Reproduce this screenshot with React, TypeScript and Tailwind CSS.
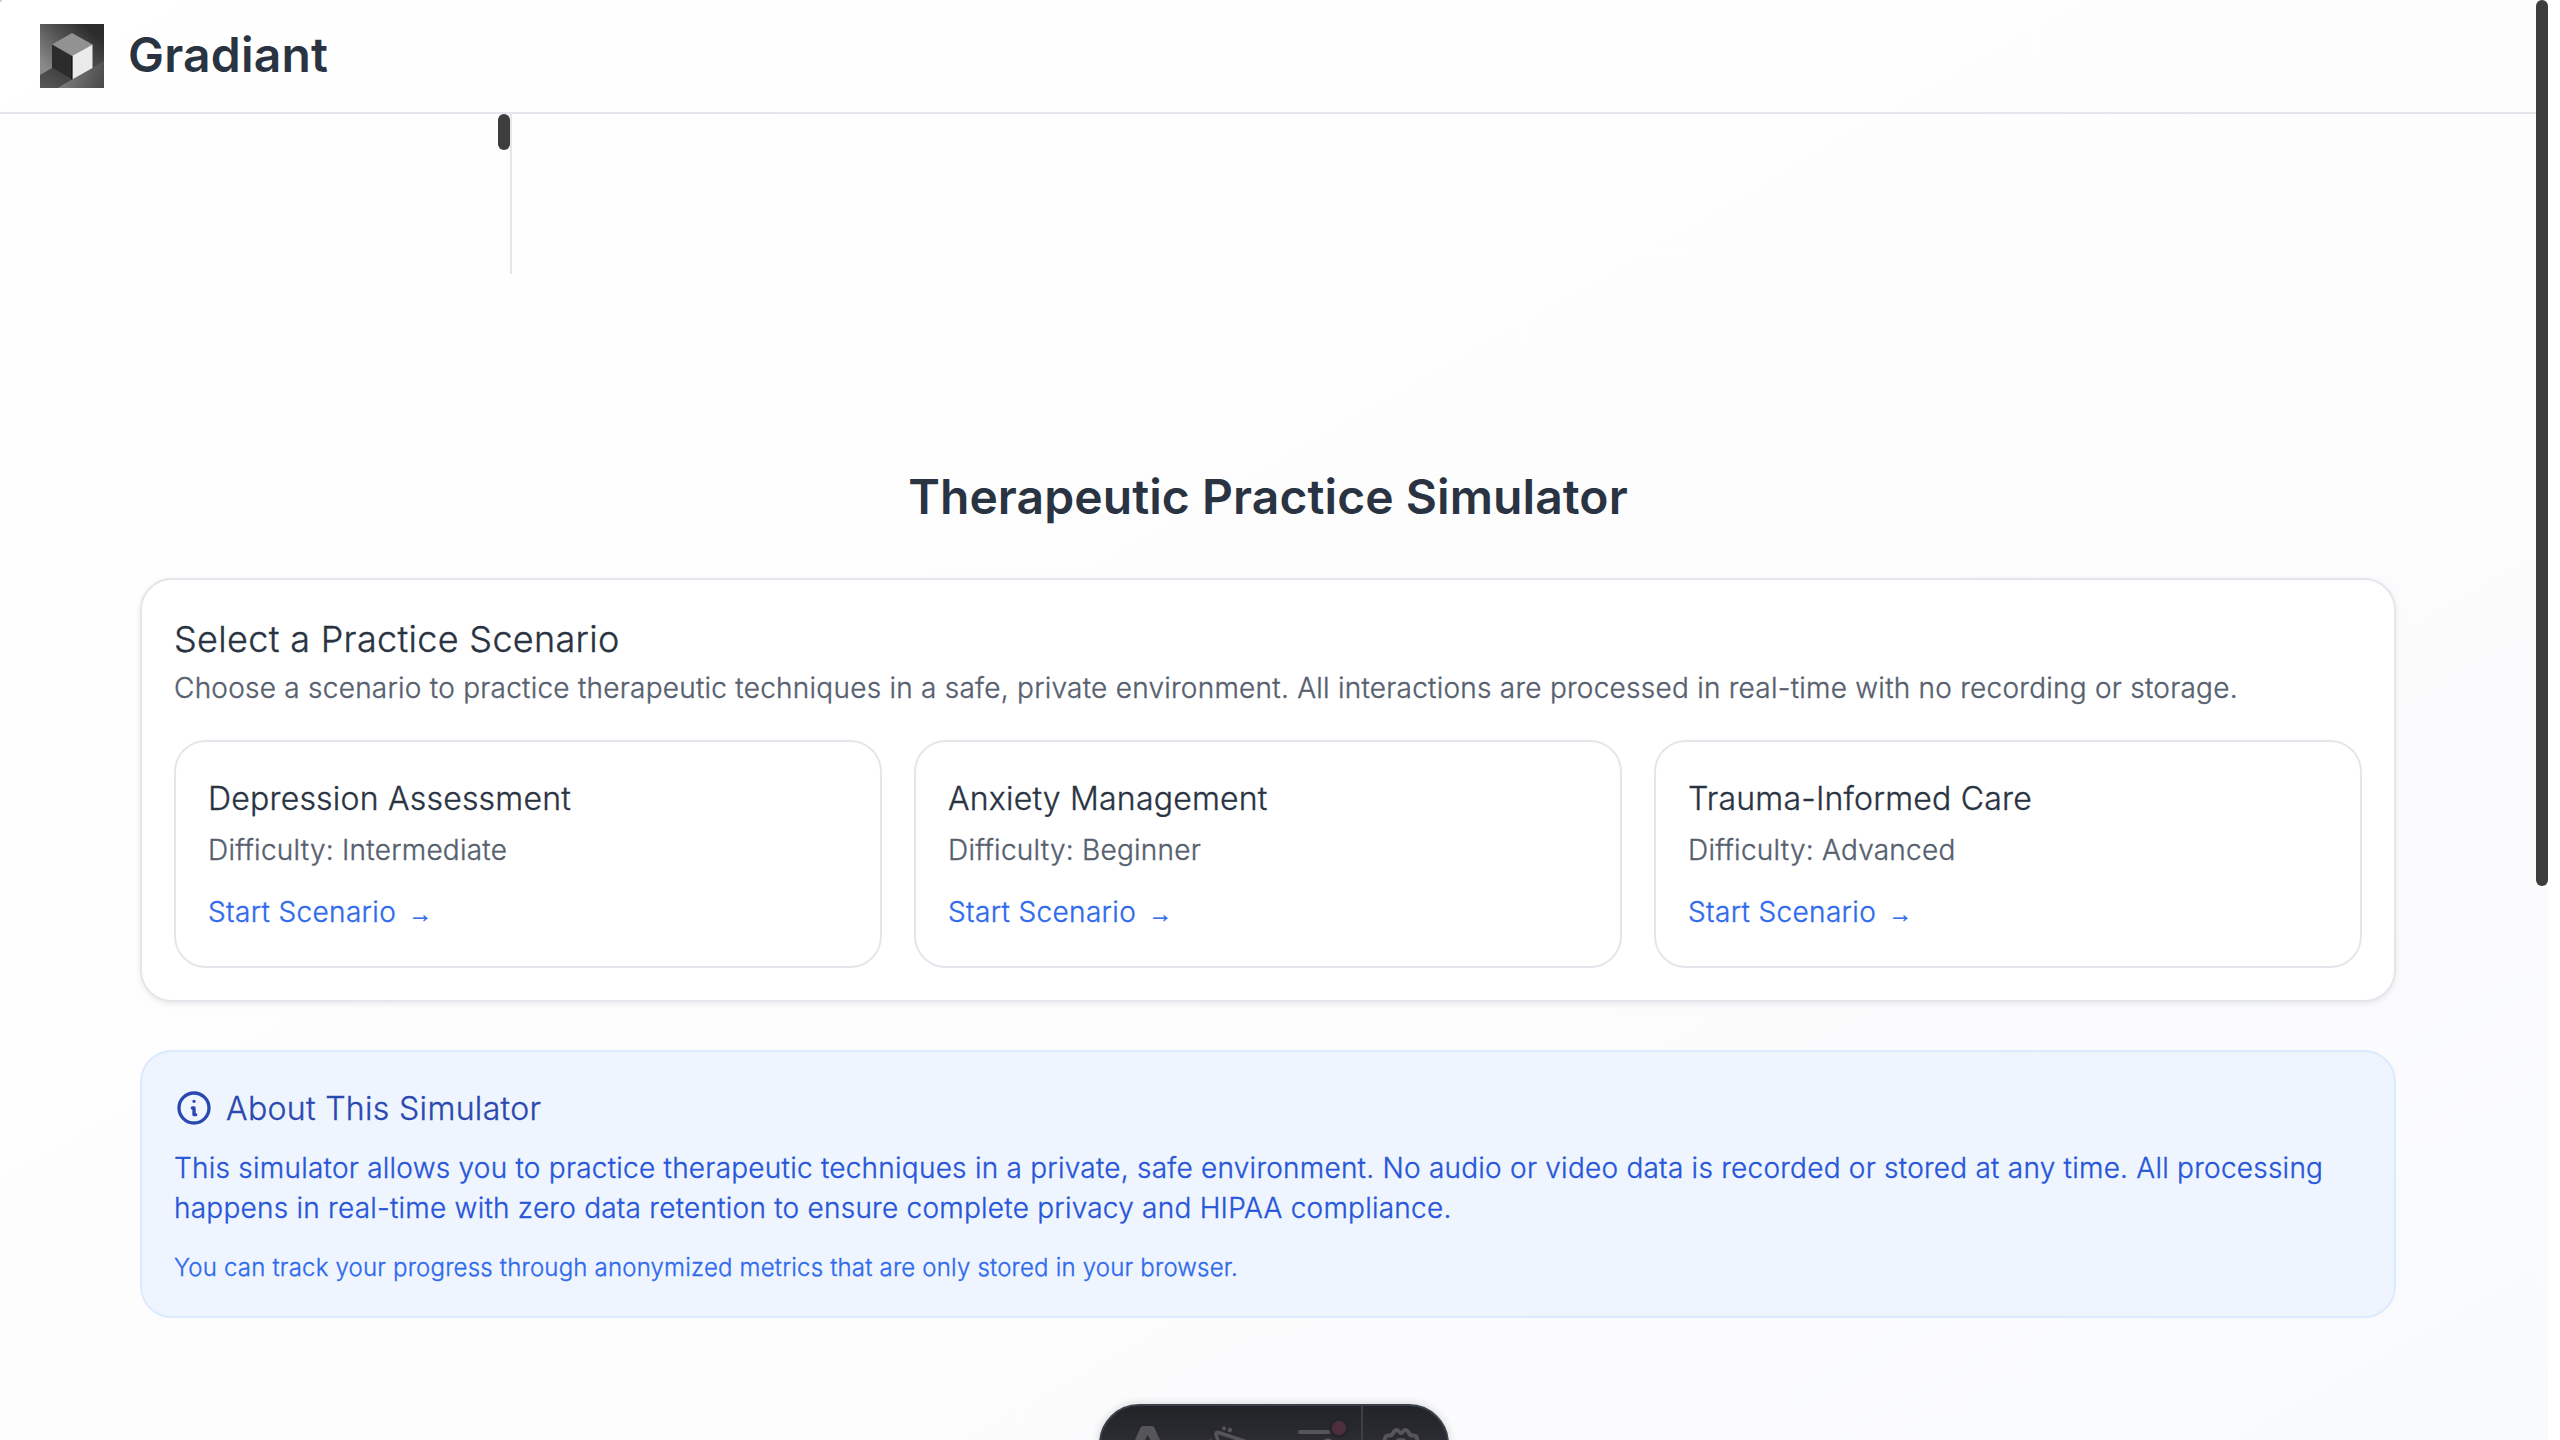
type Scenario = { title: string; difficulty: string };

const scenarios: Scenario[] = [
  { title: "Depression Assessment", difficulty: "Intermediate" },
  { title: "Anxiety Management", difficulty: "Beginner" },
  { title: "Trauma-Informed Care", difficulty: "Advanced" },
];

function Logo() {
  return (
    <svg className="size-16 shrink-0" viewBox="0 0 64 64" aria-hidden="true">
      <defs>
        <linearGradient id="wall" x1="0" y1="1" x2="1" y2="0">
          <stop offset="0.2" stopColor="#8a8a8a" />
          <stop offset="0.55" stopColor="#555555" />
          <stop offset="0.85" stopColor="#2b2b2b" />
        </linearGradient>
        <linearGradient id="side" x1="0" y1="0" x2="0" y2="1">
          <stop offset="0" stopColor="#2b2b2b" stopOpacity="0" />
          <stop offset="1" stopColor="#585858" />
        </linearGradient>
        <linearGradient id="shade" x1="0" y1="1" x2="1" y2="0">
          <stop offset="0" stopColor="#585858" />
          <stop offset="1" stopColor="#3a3a3a" />
        </linearGradient>
        <linearGradient id="floor" x1="0" y1="0.4" x2="1" y2="0.6">
          <stop offset="0" stopColor="#858585" />
          <stop offset="1" stopColor="#4c4c4c" />
        </linearGradient>
      </defs>
      <rect width="64" height="64" fill="url(#wall)" />
      <rect x="50" width="14" height="64" fill="url(#side)" />
      <path d="M32 55.500 52.500 44 64 37V64H18Z" fill="url(#floor)" />
      <path d="M0 51 12 44 32 55.500 18 64H0Z" fill="url(#shade)" />
      <path d="M12 20.500 32 9 52.500 20.500 32 32Z" fill="#929292" />
      <path d="M12 20.500 32 32V55.500L12 44Z" fill="#2c2c2c" />
      <path d="M32 32 52.500 20.500V44L32 55.500Z" fill="#ebebeb" />
      <path d="M32 32V55.500" stroke="#0c0c0c" strokeWidth="1.2" />
    </svg>
  );
}

function InfoIcon() {
  return (
    <svg
      className="size-10 shrink-0"
      viewBox="0 0 24 24"
      fill="none"
      stroke="currentColor"
      strokeWidth="2"
      strokeLinecap="round"
      strokeLinejoin="round"
      aria-hidden="true"
    >
      <path d="M13 16h-1v-4h-1m1-4h.01M21 12a9 9 0 11-18 0 9 9 0 0118 0z" />
    </svg>
  );
}

function ScenarioCard({ title, difficulty }: Scenario) {
  return (
    <div className="flex h-[228px] flex-col items-start rounded-[32px] border-2 border-[#e5e6eb] bg-white px-8 pt-[33px]">
      <h3 className="text-[32px] leading-[47px] tracking-[0.0065em] text-[#2a3342]">{title}</h3>
      <p className="mt-2 text-[28px] leading-10 tracking-[0.0085em] text-[#56606e]">Difficulty: {difficulty}</p>
      <button className="mt-[22px] flex items-baseline text-[28px] leading-10 tracking-[0.0125em] text-[#2f6aec]">
        Start Scenario
        <span className="ml-3 font-['Liberation_Sans',sans-serif] text-[24px]">→</span>
      </button>
    </div>
  );
}

function Toolbar() {
  return (
    <div className="absolute -bottom-11 left-[1099px] h-20 w-[350px] overflow-hidden rounded-full border-2 border-[#3a404a] bg-linear-to-b from-[#212327] to-[#393840] shadow-[0_0_10px_rgba(0,0,0,0.18)]">
      <svg className="-mt-0.5 -ml-px h-9 w-[348px] max-w-none" viewBox="0 0 348 36" fill="none" aria-hidden="true">
        <path d="M35 36 40.500 23.500Q41.200 22 43 22H52Q53.700 22 54.300 23.500L60 36H50.500L47.500 31 45 36Z" fill="#56565a" />
        <g stroke="#56565a" strokeWidth="3.500" strokeLinecap="round" strokeLinejoin="round">
          <path d="M119 40 116 30Q116 28 118.500 28.500L144 37" />
          <path d="M124 24.200V24.400M130 25.800 129.800 26.300M110.500 37.200V37.400" strokeWidth="4" />
          <path d="M200 28H229" strokeWidth="4.200" />
          <circle cx="228" cy="40" r="4" />
        </g>
        <circle cx="239" cy="24" r="10" fill="#24262a" />
        <circle cx="239" cy="24" r="7.200" fill="#4e2e3c" />
        <path d="M262 2V36" stroke="#3a404a" strokeWidth="2" />
        <g stroke="#56565a" strokeWidth="4">
          <path d="M285 38C284 33 286 31 290 31.500C294 31.500 293 26 296.500 26C299 26 299 29 301 29C303 29 303 26 305.500 26C309 26 308 31.500 312 31.500C316 31 318 33 317 38" />
          <circle cx="301" cy="43" r="7" />
        </g>
      </svg>
    </div>
  );
}

export default function App() {
  return (
    <div className="relative h-[1440px] w-[2560px] overflow-hidden bg-white font-['Inter',sans-serif] font-light [-webkit-text-stroke:0.35px]">
      <div className="h-full w-[2548px] bg-linear-to-br from-white via-[#fdfdfd] to-[#f9fafd]">
        <header className="flex h-[114px] items-center gap-6 border-b-2 border-[#e5e6eb] px-10">
          <Logo />
          <span className="pb-[3px] text-[48px] leading-[58px] font-semibold tracking-[0.2px] text-[#2a3342] [-webkit-text-stroke:0]">
            Gradiant
          </span>
        </header>

        <aside className="flex h-40 w-[512px] justify-end border-r-2 border-[#e5e6eb]">
          <div className="h-9 w-3 rounded-full bg-[#3d3d3d]" />
        </aside>

        <main className="ml-[140px] w-[2256px] pt-48">
          <h1 className="mb-[51px] text-center text-[48px] leading-[61px] font-semibold tracking-[0.08px] text-[#2a3342] [-webkit-text-stroke:0]">
            Therapeutic Practice Simulator
          </h1>

          <section className="h-[424px] rounded-[32px] border-2 border-[#e5e6eb] bg-white p-8 shadow-[0_2px_6px_rgba(0,0,0,0.08)]">
            <h2 className="text-[36px] leading-[54px] tracking-[0.009em] text-[#2a3342]">Select a Practice Scenario</h2>
            <p className="mt-0.5 mb-8 text-[28px] leading-10 tracking-[0.0087em] text-[#56606e]">
              Choose a scenario to practice therapeutic techniques in a safe, private environment. All interactions are
              processed in real-time with no recording or storage.
            </p>
            <div className="grid grid-cols-3 gap-8">
              {scenarios.map((s) => (
                <ScenarioCard key={s.title} {...s} />
              ))}
            </div>
          </section>

          <section className="mt-12 h-[268px] rounded-[32px] border-2 border-[#dbeafe] bg-[#eff5ff] p-8">
            <div className="flex h-12 items-end gap-3 text-[#2a49b0]">
              <span className="self-center">
                <InfoIcon />
              </span>
              <h3 className="text-[32px] leading-[47px] tracking-[0.0105em]">About This Simulator</h3>
            </div>
            <p className="mt-4 text-[28px] leading-10 tracking-[0.0085em] text-[#2856d9]">
              This simulator allows you to practice therapeutic techniques in a private, safe environment. No audio or
              video data is recorded or stored at any time. All processing happens in real-time with zero data retention
              to ensure complete privacy and HIPAA compliance.
            </p>
            <p className="mt-[22px] text-[24px] leading-[35px] tracking-[0.008em] text-[#2f6aec]">
              You can track your progress through anonymized metrics that are only stored in your browser.
            </p>
          </section>
        </main>
      </div>

      {/* Page scrollbar thumb, drawn over the content */}
      <div className="absolute top-0 left-[2536px] h-[886px] w-3 rounded-full bg-[#3d3d3d]" />
      <div className="absolute top-0 left-0 size-0.5 bg-[#d4d4d4]" />
      <Toolbar />
    </div>
  );
}
